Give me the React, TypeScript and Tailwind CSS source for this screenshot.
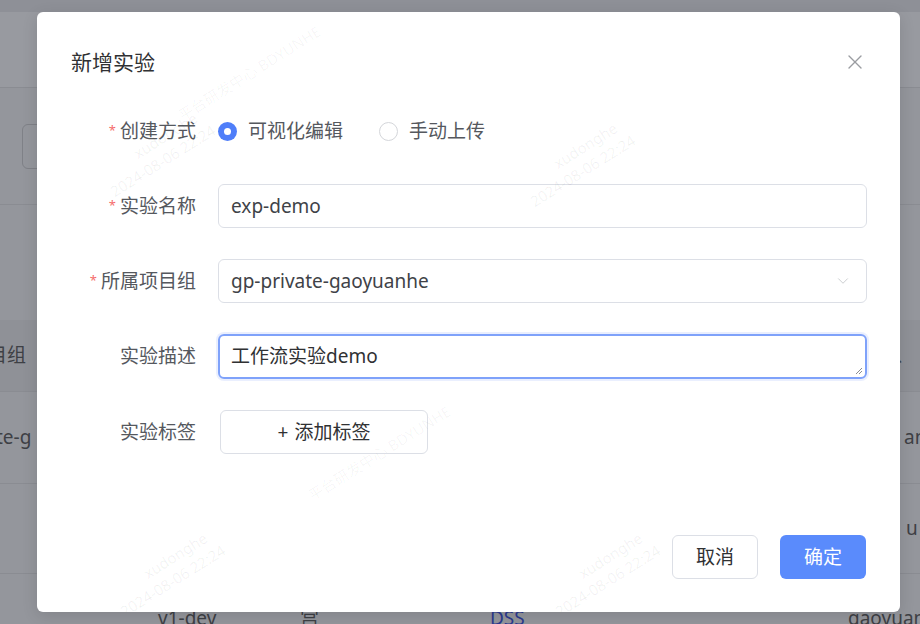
import { ChevronDown, X } from "lucide-react";

const FONT = "font-['Noto_Sans','Noto_Sans_CJK_SC',sans-serif]";

function Watermark({ className }: { className: string }) {
  return (
    <div
      className={`pointer-events-none absolute -rotate-[32deg] select-none text-[15px] leading-[20px] text-black/[0.06] ${className}`}
    >
      <div className="pl-[40px]">xudonghe</div>
      <div>2024-08-06 22:24</div>
    </div>
  );
}

function Label({ text, required }: { text: string; required?: boolean }) {
  return (
    <div className="flex w-[125px] shrink-0 items-center justify-end text-[19px] text-[#55585e]">
      {required && <span className="mr-[4px] text-[13px] text-[#f56c6c]">*</span>}
      {text}
    </div>
  );
}

function Radio({ checked, label }: { checked?: boolean; label: string }) {
  return (
    <label className="flex items-center gap-[11px]">
      {checked ? (
        <span className="flex size-[19px] items-center justify-center rounded-full bg-[#4f7ef9]">
          <span className="size-[7px] rounded-full bg-white" />
        </span>
      ) : (
        <span className="size-[19px] rounded-full border border-[#d4d6da] bg-white" />
      )}
      <span className="text-[19px] text-[#55585e]">{label}</span>
    </label>
  );
}

function Background() {
  return (
    <div className="flex h-full w-full flex-col bg-[#94969c] text-[19px] text-[#3e4045]">
      <div className="h-[12px] shrink-0 bg-[#8e9097]" />
      <div className="h-[76px] shrink-0 border-b border-[#8a8c92] bg-[#989aa0]" />
      <div className="flex h-[117px] shrink-0 items-center border-b border-[#8a8c92]">
        <div className="ml-[22px] h-[45px] w-[40px] rounded-[6px] border border-[#7f8187]" />
      </div>
      <div className="h-[115px] shrink-0" />
      <div className="flex h-[72px] shrink-0 items-center justify-between border-b border-[#8a8c92] bg-[#8f9197]">
        <div className="w-[37px] overflow-hidden whitespace-nowrap">
          <div className="-ml-[12px]">目组</div>
        </div>
        <div className="mr-[6px] text-[#3e4045]">、</div>
      </div>
      <div className="flex h-[92px] shrink-0 items-center justify-between border-b border-[#8a8c92]">
        <div className="w-[37px] overflow-hidden whitespace-nowrap">
          <div className="-ml-[4px]">te-g</div>
        </div>
        <div className="w-[20px] overflow-hidden whitespace-nowrap">
          <div className="ml-[4px]">an</div>
        </div>
      </div>
      <div className="flex h-[90px] shrink-0 items-center justify-end border-b border-[#8a8c92]">
        <div className="w-[20px] overflow-hidden whitespace-nowrap">
          <div className="ml-[6px]">u</div>
        </div>
      </div>
      <div className="flex h-[90px] shrink-0 items-center overflow-hidden pb-[2px]">
        <div className="ml-[158px] w-[142px] shrink-0">v1-dev</div>
        <div className="w-[190px] shrink-0">宫</div>
        <div className="w-[358px] shrink-0 text-[#2b3a8f]">DSS</div>
        <div className="shrink-0 whitespace-nowrap">gaoyuanhe</div>
      </div>
    </div>
  );
}

export default function App() {
  return (
    <div className={`relative h-[624px] w-[920px] overflow-hidden ${FONT}`}>
      <Background />

      {/* 弹窗 */}
      <div className="absolute left-[37px] top-[12px] flex h-[600px] w-[863px] flex-col overflow-hidden rounded-[6px] bg-white shadow-[0_4px_16px_rgba(0,0,0,0.12)]">
        <Watermark className="left-[60px] top-[120px]" />
        <Watermark className="left-[480px] top-[130px]" />
        <Watermark className="left-[70px] top-[540px]" />
        <Watermark className="left-[505px] top-[540px]" />
        <div className="pointer-events-none absolute left-[130px] top-[50px] -rotate-[32deg] text-[15px] text-black/[0.04]">
          平台研发中心 BDYUNHE
        </div>
        <div className="pointer-events-none absolute left-[260px] top-[430px] -rotate-[32deg] text-[15px] text-black/[0.04]">
          平台研发中心 BDYUNHE
        </div>

        {/* 标题 */}
        <div className="flex items-center justify-between pl-[34px] pr-[33px] pt-[35px]">
          <h2 className="text-[21px] leading-[30px] text-[#303133]">新增实验</h2>
          <X className="size-[24px] text-[#9a9ca1]" strokeWidth={1.4} />
        </div>

        {/* 表单 */}
        <div className="flex flex-col gap-[31px] pl-[34px] pr-[33px] pt-[32px]">
          <div className="flex h-[44px] items-center">
            <Label text="创建方式" required />
            <div className="ml-[22px] flex items-center gap-[36px]">
              <Radio checked label="可视化编辑" />
              <Radio label="手动上传" />
            </div>
          </div>

          <div className="flex h-[44px] items-center">
            <Label text="实验名称" required />
            <div className="ml-[22px] flex h-[44px] flex-1 items-center rounded-[6px] border border-[#dcdfe6] px-[12px] text-[19px] text-[#404247]">
              exp-demo
            </div>
          </div>

          <div className="flex h-[44px] items-center">
            <Label text="所属项目组" required />
            <div className="ml-[22px] flex h-[44px] flex-1 items-center justify-between rounded-[6px] border border-[#dcdfe6] pl-[12px] pr-[14px] text-[19px] text-[#404247]">
              <span>gp-private-gaoyuanhe</span>
              <ChevronDown className="size-[18px] text-[#c6c8cc]" strokeWidth={1.2} />
            </div>
          </div>

          <div className="flex h-[45px] items-center">
            <Label text="实验描述" />
            <div className="relative ml-[22px] flex h-[45px] flex-1 items-center rounded-[6px] border-2 border-[#7fa2fa] px-[11px] text-[19px] text-[#303133] shadow-[0_0_0_2px_rgba(79,126,249,0.12)]">
              工作流实验demo
              <svg className="absolute bottom-[2px] right-[2px] size-[9px]" viewBox="0 0 9 9">
                <path d="M8 2 L2 8 M8 5 L5 8" stroke="#8a8c90" strokeWidth="1" />
              </svg>
            </div>
          </div>

          <div className="flex h-[44px] items-center">
            <Label text="实验标签" />
            <button className="ml-[24px] flex h-[44px] w-[208px] items-center justify-center gap-[6px] rounded-[6px] border border-[#dcdfe6] bg-white text-[19px] text-[#303133]">
              <span>+</span>
              <span>添加标签</span>
            </button>
          </div>
        </div>

        {/* 底部按钮 */}
        <div className="mt-auto flex justify-end gap-[22px] pb-[33px] pr-[34px]">
          <button className="h-[44px] w-[86px] rounded-[6px] border border-[#dcdfe6] bg-white text-[19px] text-[#303133]">
            取消
          </button>
          <button className="h-[44px] w-[86px] rounded-[6px] bg-[#5a8bfc] text-[19px] text-white">
            确定
          </button>
        </div>
      </div>
    </div>
  );
}
